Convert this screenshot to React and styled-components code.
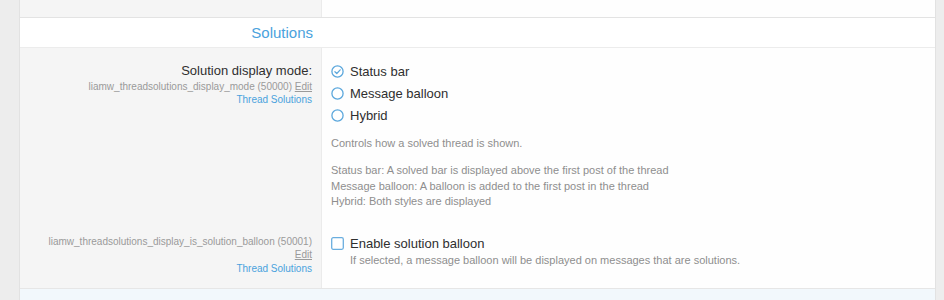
import React from 'react';
import styled, { createGlobalStyle } from 'styled-components';

const GlobalStyle = createGlobalStyle`
  html, body {
    margin: 0;
    padding: 0;
    background: #ededed;
    font-family: "Liberation Sans", Arial, Helvetica, sans-serif;
    -webkit-font-smoothing: antialiased;
  }
`;

const Page = styled.div`
  padding: 0 8px 0 19px;
`;

const Block = styled.div`
  background: #fff;
  border-left: 1px solid #e2e2e2;
  border-right: 1px solid #e2e2e2;
`;

const Row = styled.dl`
  display: flex;
  margin: 0;
  border-bottom: ${p => (p.$last ? '1px solid #e6e6e6' : 'none')};
`;

const Term = styled.dt`
  width: 302px;
  flex: none;
  box-sizing: border-box;
  background: #f5f5f5;
  border-right: 1px solid #ebebeb;
  text-align: right;
  padding: ${p => p.$pad || '14px 9px 12px 0'};
  min-height: ${p => p.$min || 0}px;
`;

const Desc = styled.dd`
  flex: 1;
  margin: 0;
  padding: ${p => p.$pad || '12px 10px 13px 9px'};
  background: #fefefe;
`;

const Label = styled.div`
  font-size: 13px;
  line-height: 18px;
  color: #2f2f2f;
`;

const Meta = styled.div`
  font-size: 10px;
  line-height: ${p => p.$lh || 13}px;
  color: #9a9a9a;
`;

const EditLink = styled.span`
  text-decoration: underline;
  color: #9a9a9a;
`;

const AddonLink = styled.div`
  font-size: 10px;
  line-height: ${p => p.$lh || 13}px;
  color: #4aa2dd;
`;

const HeaderRow = styled.div`
  background: #fff;
  border-top: 1px solid #e3e3e3;
  border-bottom: 1px solid #ececec;
`;

const SectionHeader = styled.h3`
  margin: 0;
  width: 293px;
  font-weight: normal;
  font-size: 15px;
  line-height: 29px;
  color: #4aa2dd;
  text-align: right;
`;

const Choice = styled.label`
  display: flex;
  align-items: center;
  gap: 6px;
  height: ${p => p.$h || 22}px;
  font-size: 13px;
  color: #2f2f2f;
`;

const Hint = styled.div`
  font-size: 11px;
  line-height: ${p => p.$lh || 15}px;
  color: #8e8e8e;
  margin-top: ${p => p.$mt || 0}px;
  padding-left: ${p => p.$indent || 0}px;
`;

const Footer = styled.div`
  background: #f2f8fc;
  padding: 9px 10px 0 10px;
  font-size: 15px;
  color: #2b5d86;
  height: 40px;
`;

const RadioIcon = ({ checked }) => (
  <svg width="13" height="13" viewBox="0 0 13 13">
    <circle cx="6.5" cy="6.5" r="5.6" fill="#fff" stroke="#5ba7dc" strokeWidth="1.3" />
    {checked && (
      <path d="M3.9 6.7 L5.8 8.5 L9.2 4.8" fill="none" stroke="#5ba7dc" strokeWidth="1.2" strokeLinecap="round" strokeLinejoin="round" />
    )}
  </svg>
);

const CheckIcon = () => (
  <svg width="13" height="13" viewBox="0 0 13 13">
    <rect x="0.7" y="0.7" width="11.6" height="11.6" rx="1.5" fill="#fff" stroke="#6aaedf" strokeWidth="1.3" />
  </svg>
);

const modes = [
  { label: 'Status bar', checked: true },
  { label: 'Message balloon' },
  { label: 'Hybrid' },
];

const App = () => (
  <>
    <GlobalStyle />
    <Page>
      <Block>
        <Row>
          <Term $pad="0" $min={17} />
          <Desc $pad="0" />
        </Row>
        <HeaderRow>
          <SectionHeader>Solutions</SectionHeader>
        </HeaderRow>
        <Row>
          <Term>
            <Label>Solution display mode:</Label>
            <Meta>liamw_threadsolutions_display_mode (50000) <EditLink>Edit</EditLink></Meta>
            <AddonLink>Thread Solutions</AddonLink>
          </Term>
          <Desc>
            {modes.map(m => (
              <Choice key={m.label}>
                <RadioIcon checked={m.checked} />
                {m.label}
              </Choice>
            ))}
            <Hint $mt={10}>Controls how a solved thread is shown.</Hint>
            <Hint $mt={12} $lh={15.5}>
              Status bar: A solved bar is displayed above the first post of the thread<br />
              Message balloon: A balloon is added to the first post in the thread<br />
              Hybrid: Both styles are displayed
            </Hint>
          </Desc>
        </Row>
        <Row $last>
          <Term $pad="12px 9px 13px 0">
            <Meta $lh={13.5}>liamw_threadsolutions_display_is_solution_balloon (50001)</Meta>
            <Meta $lh={13.5}><EditLink>Edit</EditLink></Meta>
            <AddonLink $lh={13.5}>Thread Solutions</AddonLink>
          </Term>
          <Desc $pad="12px 10px 14px 9px">
            <Choice $h={18}>
              <CheckIcon />
              Enable solution balloon
            </Choice>
            <Hint $indent={19}>If selected, a message balloon will be displayed on messages that are solutions.</Hint>
          </Desc>
        </Row>
        <Footer>Miscellaneous options</Footer>
      </Block>
    </Page>
  </>
);

export default App;
